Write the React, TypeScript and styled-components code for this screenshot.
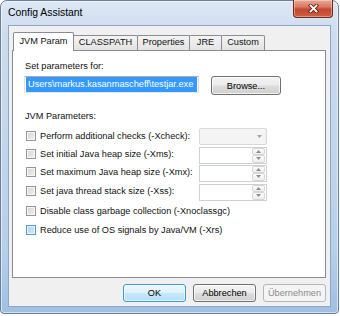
import React from "react";
import styled, { createGlobalStyle, css } from "styled-components";

const GlobalStyle = createGlobalStyle`
  html, body { margin: 0; padding: 0; background: #ffffff; }
  body {
    font-family: "Liberation Sans", Arial, sans-serif;
    font-size: 9.2px;
    color: #111;
  }
  #root { width: 340px; height: 316px; }
`;

const Window = styled.div`
  box-sizing: border-box;
  width: 339px;
  height: 314px;
  border: 1px solid #6b7f98;
  border-radius: 7px 7px 4px 4px;
  background: linear-gradient(
    180deg,
    #dde8f5 0%,
    #cddcef 10%,
    #c2d6ec 45%,
    #b6cfea 80%,
    #9fc0e3 100%
  );
  box-shadow: inset 0 0 0 1px rgba(255, 255, 255, 0.55);
  padding: 0 7px 6px 7px;
  display: flex;
  flex-direction: column;
`;

const TitleBar = styled.div`
  height: 24px;
  display: flex;
  align-items: center;
`;

const Title = styled.span`
  font-size: 10.4px;
  line-height: 12px;
  color: #000;
`;

const CloseButton = styled.div`
  align-self: flex-start;
  margin-left: auto;
  margin-right: -2px;
  margin-top: -1px;
  box-sizing: border-box;
  width: 40px;
  height: 18px;
  border: 1px solid #6e2b20;
  border-top: none;
  border-radius: 0 0 4px 4px;
  background: linear-gradient(
    180deg,
    #eaa898 0%,
    #d97a64 40%,
    #c6462e 55%,
    #cf5d44 100%
  );
  box-shadow: inset 0 0 0 1px rgba(255, 255, 255, 0.35);
  display: flex;
  align-items: center;
  justify-content: center;
`;

const Client = styled.div`
  flex: 1;
  box-sizing: border-box;
  border: 1px solid #8da6c2;
  background: #f0f0f0;
  padding: 6px 4px 4px 3px;
  display: flex;
  flex-direction: column;
`;

const TabRow = styled.div`
  display: flex;
  align-items: flex-end;
  height: 18px;
  padding-left: 2px;
  position: relative;
  z-index: 1;
`;

const Tab = styled.div<{ $w: number; $active?: boolean }>`
  box-sizing: border-box;
  flex: none;
  width: ${(p) => p.$w}px;
  margin-left: -1px;
  border: 1px solid #898c95;
  border-bottom: none;
  border-radius: 2px 2px 0 0;
  text-align: center;
  line-height: 12px;
  white-space: nowrap;
  position: relative;
  ${(p) =>
    p.$active
      ? css`
          height: 19px;
          margin-bottom: -1px;
          padding-top: 2px;
          background: #ffffff;
          z-index: 2;
        `
      : css`
          height: 15px;
          padding-top: 0;
          background: linear-gradient(180deg, #f4f4f4 0%, #ebebeb 50%, #e3e3e3 100%);
          z-index: 1;
        `}
`;

const Panel = styled.div`
  box-sizing: border-box;
  height: 228px;
  border: 1px solid #898c95;
  background: #ffffff;
  padding: 9px 12px 0 12px;
  display: flex;
  flex-direction: column;
`;

const Label = styled.div`
  line-height: 12px;
  height: 12px;
  white-space: nowrap;
`;

const SectionLabel = styled(Label)`
  margin-top: 15px;
`;

const InputRow = styled.div`
  display: flex;
  align-items: flex-start;
  margin-top: 4px;
  height: 19px;
`;

const TextField = styled.div`
  box-sizing: border-box;
  flex: none;
  width: 175px;
  height: 17px;
  margin-left: -1px;
  border: 1px solid;
  border-color: #abadb3 #dbdfe6 #e3e9ef #e2e3ea;
  background: #ffffff;
  padding: 0 0 0 1px;
  overflow: hidden;
  white-space: nowrap;
`;

const Selection = styled.span`
  display: inline-block;
  height: 15px;
  line-height: 15px;
  padding-left: 2px;
  padding-right: 4px;
  background: #3399ff;
  color: #ffffff;
`;

const Button = styled.div<{ $w: number; $variant?: "default" | "normal" | "disabled" }>`
  box-sizing: border-box;
  flex: none;
  width: ${(p) => p.$w}px;
  border-radius: 3px;
  display: flex;
  align-items: center;
  justify-content: center;
  white-space: nowrap;
  ${(p) =>
    p.$variant === "default"
      ? css`
          border: 1px solid #3c9ad6;
          background: linear-gradient(180deg, #eef8fe 0%, #ddf1fc 48%, #c6e7fa 52%, #b8e0f7 100%);
          box-shadow: inset 0 0 0 1px rgba(255, 255, 255, 0.6);
          color: #000;
        `
      : p.$variant === "disabled"
      ? css`
          border: 1px solid #b3b7ba;
          background: #f4f4f4;
          color: #8a8a8a;
        `
      : css`
          border: 1px solid #707070;
          background: linear-gradient(180deg, #f3f3f3 0%, #ebebeb 48%, #dddddd 52%, #cfcfcf 100%);
          box-shadow: inset 0 0 0 1px rgba(255, 255, 255, 0.7);
          color: #000;
        `}
`;

const BrowseButton = styled(Button)`
  margin-left: 12px;
  height: 19px;
`;

const Options = styled.div`
  margin-top: 5px;
  display: flex;
  flex-direction: column;
`;

const OptionRow = styled.div<{ $h: number }>`
  display: flex;
  align-items: center;
  height: ${(p) => p.$h}px;
  padding-left: 1px;
`;

const CheckLabel = styled.div`
  flex: none;
  width: 173px;
  display: flex;
  align-items: center;
  gap: 4px;
  white-space: nowrap;
  line-height: 12px;
`;

const CheckBox = styled.div<{ $hover?: boolean }>`
  box-sizing: border-box;
  width: 10px;
  height: 10px;
  flex: none;
  ${(p) =>
    p.$hover
      ? css`
          border: 1px solid #5b98d0;
          background: linear-gradient(135deg, #a9d4f2 0%, #d5ebfa 100%);
          box-shadow: inset 0 0 0 1px #e6f3fc;
        `
      : css`
          border: 1px solid #979797;
          background: linear-gradient(135deg, #d2d4d6 0%, #f1f1f1 100%);
          box-shadow: inset 0 0 0 1px #f6f6f6;
        `}
`;

const Combo = styled.div`
  box-sizing: border-box;
  flex: none;
  width: 68px;
  height: 17px;
  border: 1px solid #d9d9d9;
  border-radius: 2px;
  background: #f4f4f4;
  display: flex;
  align-items: center;
  justify-content: flex-end;
  padding-right: 4px;
`;

const SpinField = styled.div`
  box-sizing: border-box;
  flex: none;
  width: 68px;
  height: 17px;
  margin-top: 2px;
  border: 1px solid #cdd0d4;
  background: #ffffff;
  display: flex;
  justify-content: flex-end;
  padding: 0 1px 0 0;
`;

const SpinButtons = styled.div`
  width: 13px;
  display: flex;
  flex-direction: column;
`;

const SpinBtn = styled.div`
  flex: 1;
  box-sizing: border-box;
  border: 1px solid #d6d6d6;
  border-radius: 2px;
  background: linear-gradient(180deg, #fbfbfb 0%, #eeeeee 100%);
  display: flex;
  align-items: center;
  justify-content: center;
`;

const ButtonRow = styled.div`
  margin-top: 6px;
  display: flex;
  justify-content: flex-end;
  gap: 7px;
`;

const DialogButton = styled(Button)`
  height: 18px;
`;

const CloseIcon = () => (
  <svg width="11" height="9" viewBox="0 0 11 9">
    <path d="M2.5 1.5 L8.5 7.5 M8.5 1.5 L2.5 7.5" stroke="#5a1c12" strokeWidth="3.4" strokeLinecap="square" />
    <path d="M2.5 1.5 L8.5 7.5 M8.5 1.5 L2.5 7.5" stroke="#ffffff" strokeWidth="1.8" strokeLinecap="square" />
  </svg>
);

const ArrowDown = ({ color = "#a3a3a3" }: { color?: string }) => (
  <svg width="5" height="3" viewBox="0 0 5 3">
    <path d="M0 0 H5 L2.5 3 Z" fill={color} />
  </svg>
);

const ArrowUp = ({ color = "#8c8c8c" }: { color?: string }) => (
  <svg width="5" height="3" viewBox="0 0 5 3">
    <path d="M0 3 H5 L2.5 0 Z" fill={color} />
  </svg>
);

const Spin = () => (
  <SpinField>
    <SpinButtons>
      <SpinBtn>
        <ArrowUp />
      </SpinBtn>
      <SpinBtn>
        <ArrowDown color="#8c8c8c" />
      </SpinBtn>
    </SpinButtons>
  </SpinField>
);

const tabs = [
  { label: "JVM Param", w: 61, active: true },
  { label: "CLASSPATH", w: 65 },
  { label: "Properties", w: 53 },
  { label: "JRE", w: 33 },
  { label: "Custom", w: 44 },
];

type Opt = { label: string; h: number; control?: "combo" | "spin"; hover?: boolean };

const options: Opt[] = [
  { label: "Perform additional checks (-Xcheck):", h: 18, control: "combo" },
  { label: "Set initial Java heap size (-Xms):", h: 18, control: "spin" },
  { label: "Set maximum Java heap size (-Xmx):", h: 18, control: "spin" },
  { label: "Set java thread stack size (-Xss):", h: 20, control: "spin" },
  { label: "Disable class garbage collection (-Xnoclassgc)", h: 19 },
  { label: "Reduce use of OS signals by Java/VM (-Xrs)", h: 19, hover: true },
];

export default function App() {
  return (
    <>
      <GlobalStyle />
      <Window>
        <TitleBar>
          <Title>Config Assistant</Title>
          <CloseButton>
            <CloseIcon />
          </CloseButton>
        </TitleBar>
        <Client>
          <TabRow>
            {tabs.map((t) => (
              <Tab key={t.label} $w={t.w} $active={t.active}>
                {t.label}
              </Tab>
            ))}
          </TabRow>
          <Panel>
            <Label>Set parameters for:</Label>
            <InputRow>
              <TextField>
                <Selection>Users\markus.kasanmascheff\testjar.exe</Selection>
              </TextField>
              <BrowseButton $w={70}>Browse...</BrowseButton>
            </InputRow>
            <SectionLabel>JVM Parameters:</SectionLabel>
            <Options>
              {options.map((o) => (
                <OptionRow key={o.label} $h={o.h}>
                  <CheckLabel>
                    <CheckBox $hover={o.hover} />
                    <span>{o.label}</span>
                  </CheckLabel>
                  {o.control === "combo" && (
                    <Combo>
                      <ArrowDown />
                    </Combo>
                  )}
                  {o.control === "spin" && <Spin />}
                </OptionRow>
              ))}
            </Options>
          </Panel>
          <ButtonRow>
            <DialogButton $w={63} $variant="default">
              OK
            </DialogButton>
            <DialogButton $w={63}>Abbrechen</DialogButton>
            <DialogButton $w={63} $variant="disabled">
              Übernehmen
            </DialogButton>
          </ButtonRow>
        </Client>
      </Window>
    </>
  );
}
